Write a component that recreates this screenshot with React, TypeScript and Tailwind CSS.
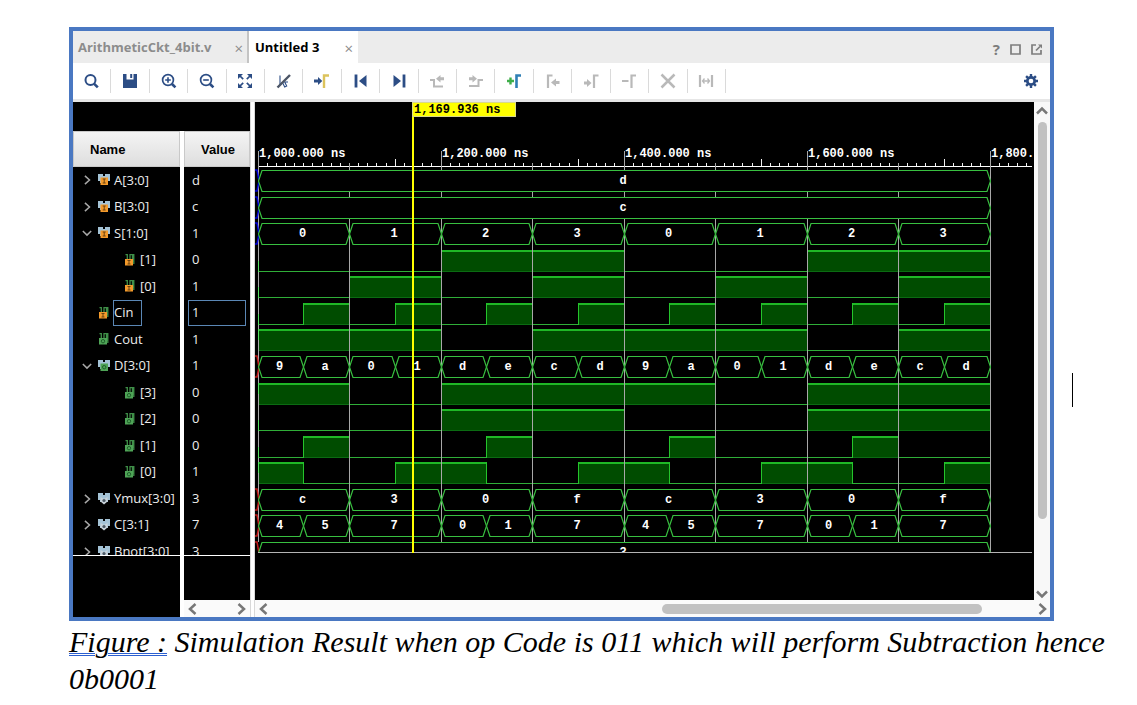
import type { ReactNode } from "react";

type Kind = "bus-in" | "bus-out" | "bus" | "bit-in" | "bit-out";
type Cell = { from: number; to: number; label: string };
type Signal = {
  name: string;
  value: string;
  kind: Kind;
  tree?: "open" | "closed";
  nested?: boolean;
  selected?: boolean;
  start?: string;
  cells?: Cell[];
  high?: [number, number][];
};

const spread = (labels: string, step: number): Cell[] =>
  labels.split("").map((label, i) => ({
    from: 1000 + i * step,
    to: 1000 + (i + 1) * step,
    label,
  }));

const carry: Cell[] = [1000, 1400].flatMap((t) => [
  { from: t, to: t + 50, label: "4" },
  { from: t + 50, to: t + 100, label: "5" },
  { from: t + 100, to: t + 200, label: "7" },
  { from: t + 200, to: t + 250, label: "0" },
  { from: t + 250, to: t + 300, label: "1" },
  { from: t + 300, to: t + 400, label: "7" },
]);

const BLUE = "#0000d8";
const RED = "#c01818";

const signals: Signal[] = [
  { name: "A[3:0]", value: "d", kind: "bus-in", tree: "closed", start: BLUE, cells: spread("d", 800) },
  { name: "B[3:0]", value: "c", kind: "bus-in", tree: "closed", start: BLUE, cells: spread("c", 800) },
  { name: "S[1:0]", value: "1", kind: "bus-in", tree: "open", start: BLUE, cells: spread("01230123", 100) },
  { name: "[1]", value: "0", kind: "bit-in", nested: true, high: [[1200, 1400], [1600, 1800]] },
  { name: "[0]", value: "1", kind: "bit-in", nested: true, high: [[1100, 1200], [1300, 1400], [1500, 1600], [1700, 1800]] },
  {
    name: "Cin", value: "1", kind: "bit-in", selected: true,
    high: [[1050, 1100], [1150, 1200], [1250, 1300], [1350, 1400], [1450, 1500], [1550, 1600], [1650, 1700], [1750, 1800]],
  },
  { name: "Cout", value: "1", kind: "bit-out", high: [[1000, 1200], [1300, 1600], [1700, 1800]] },
  { name: "D[3:0]", value: "1", kind: "bus-out", tree: "open", start: RED, cells: spread("9a01decd9a01decd", 50) },
  { name: "[3]", value: "0", kind: "bit-out", nested: true, high: [[1000, 1100], [1200, 1500], [1600, 1800]] },
  { name: "[2]", value: "0", kind: "bit-out", nested: true, high: [[1200, 1400], [1600, 1800]] },
  { name: "[1]", value: "0", kind: "bit-out", nested: true, high: [[1050, 1100], [1250, 1300], [1450, 1500], [1650, 1700]] },
  { name: "[0]", value: "1", kind: "bit-out", nested: true, high: [[1000, 1050], [1150, 1250], [1350, 1450], [1550, 1650], [1750, 1800]] },
  { name: "Ymux[3:0]", value: "3", kind: "bus", tree: "closed", start: RED, cells: spread("c30fc30f", 100) },
  { name: "C[3:1]", value: "7", kind: "bus", tree: "closed", start: RED, cells: carry },
  { name: "Bnot[3:0]", value: "3", kind: "bus", tree: "closed", start: RED, cells: spread("3", 800) },
];

/* ---------- icons ---------- */

function Icon({ children, tone = "#2c4d85" }: { children: ReactNode; tone?: string }) {
  return (
    <svg width="16" height="16" viewBox="0 0 16 16" fill="none" stroke={tone} strokeWidth="2" aria-hidden="true">
      {children}
    </svg>
  );
}

const OFF = "#b9b9b9";

const tools: { label: string; icon: ReactNode; disabled?: boolean }[] = [
  { label: "Find", icon: <Icon><circle cx="6.5" cy="7" r="5" /><path d="M10.200 10.800 13.800 14.400" strokeWidth="2.6" /></Icon> },
  {
    label: "Save",
    icon: (
      <Icon>
        <path d="M1 1h3.5v5.5h7V1H15v14H1z" fill="#2c4d85" stroke="none" />
        <path d="M8.2 1h2v4h-2z" fill="#2c4d85" stroke="none" />
      </Icon>
    ),
  },
  { label: "Zoom In", icon: <Icon><circle cx="7" cy="7" r="5.4" strokeWidth="1.7" /><path d="M4.2 7h5.6M7 4.2v5.6" strokeWidth="1.6" /><path d="M11 11l3.4 3.4" strokeWidth="2.6" /></Icon> },
  { label: "Zoom Out", icon: <Icon><circle cx="7" cy="7" r="5.4" strokeWidth="1.7" /><path d="M4.2 7h5.6" strokeWidth="1.6" /><path d="M11 11l3.4 3.4" strokeWidth="2.6" /></Icon> },
  {
    label: "Zoom Fit",
    icon: (
      <Icon>
        <path d="M1 1h5L1 6zM15 1v5l-5-5zM1 15v-5l5 5zM15 15h-5l5-5z" fill="#2c4d85" stroke="none" />
        <path d="M2.5 2.5l3.7 3.7M13.5 2.5 9.8 6.2M2.5 13.5l3.7-3.7M13.5 13.5 9.8 9.8" strokeWidth="1.7" />
      </Icon>
    ),
  },
  {
    label: "Snap Cursor Off",
    icon: (
      <Icon>
        <path d="M4 2.500v9l2.500-2 2.200 4.500 2-1-2-4H12" strokeWidth="1.100" />
        <path d="M1.500 14.500 14 2" stroke="#4c5566" strokeWidth="2.400" />
      </Icon>
    ),
  },
  {
    label: "Go to Cursor",
    icon: (
      <Icon>
        <path d="M0 6.500h4V4l4.300 4L4 12V9.500H0z" fill="#2c4d85" stroke="none" />
        <path d="M10 15V2.500h5" stroke="#dcc35c" strokeWidth="2.400" />
      </Icon>
    ),
  },
  { label: "Go to Start", icon: <Icon><path d="M3 1.500v13" strokeWidth="2.800" /><path d="M13.500 2v12L6 8z" fill="#2c4d85" stroke="none" /></Icon> },
  { label: "Go to End", icon: <Icon><path d="M13 1.500v13" strokeWidth="2.800" /><path d="M2.500 2v12L10 8z" fill="#2c4d85" stroke="none" /></Icon> },
  {
    label: "Previous Transition",
    disabled: true,
    icon: (
      <Icon tone={OFF}>
        <path d="M1 7h4v6.500H14" />
        <path d="M15 4.200h-3.500V2L7 5.700l4.500 3.800V7.200H15z" fill={OFF} stroke="none" />
      </Icon>
    ),
  },
  {
    label: "Next Transition",
    disabled: true,
    icon: (
      <Icon tone={OFF}>
        <path d="M1 13h9.500V7H15" />
        <path d="M1 4.200h3.500V2L9 5.700 4.500 9.500V7.200H1z" fill={OFF} stroke="none" />
      </Icon>
    ),
  },
  {
    label: "Add Marker",
    icon: (
      <Icon>
        <path d="M1 8h7M4.500 4.500v7" stroke="#3fae49" strokeWidth="2.400" />
        <path d="M10.500 15V2.500H15" stroke="#2f7fb5" strokeWidth="2.600" />
      </Icon>
    ),
  },
  {
    label: "Previous Marker",
    disabled: true,
    icon: (
      <Icon tone={OFF}>
        <path d="M3 15V2.500h4.500" strokeWidth="2.200" />
        <path d="M14.500 8H11V5.500L6 9.500 11 13.500V11h3.500z" fill={OFF} stroke="none" />
      </Icon>
    ),
  },
  {
    label: "Next Marker",
    disabled: true,
    icon: (
      <Icon tone={OFF}>
        <path d="M11 15V2.500h4.500" strokeWidth="2.200" />
        <path d="M1 8.500h3V6l4.500 4L4 14v-2.500H1z" fill={OFF} stroke="none" />
      </Icon>
    ),
  },
  { label: "Remove Marker", disabled: true, icon: <Icon tone={OFF}><path d="M1 8h6.500M10.500 15V2.500H15" strokeWidth="2.200" /></Icon> },
  { label: "Delete", disabled: true, icon: <Icon tone={OFF}><path d="M1.500 1.500l13 13M14.500 1.500l-13 13" strokeWidth="2.500" /></Icon> },
  {
    label: "Swap Cursors",
    disabled: true,
    icon: <Icon tone={OFF}><path d="M2 2v12M14 2v12" strokeWidth="2.200" /><path d="M4.500 8h7M6.500 5.500 4.500 8l2 2.500M9.500 5.500l2 2.500-2 2.500" strokeWidth="1.300" /></Icon>,
  },
];

function Gear() {
  return (
    <svg width="14" height="14" viewBox="0 0 14 14" fill="none" stroke="#2c4d85" aria-hidden="true">
      <circle cx="7" cy="7" r="3.700" strokeWidth="2.700" />
      <path
        d="M7 0v3M7 11v3M0 7h3M11 7h3M2.100 2.100l2 2M9.900 9.900l2 2M11.900 2.100l-2 2M4.100 9.900l-2 2"
        strokeWidth="2.400"
      />
    </svg>
  );
}

function Chevron({ to, small }: { to: "left" | "right" | "up" | "down"; small?: boolean }) {
  const d = {
    left: "M8.500 1 3 6l5.500 5",
    right: "M3.500 1 9 6l-5.500 5",
    up: "M1 8.500 6 3.500l5 5",
    down: "M1 3.500 6 8.500l5-5",
  }[to];
  return (
    <svg
      className="block shrink-0"
      width={small ? 10 : 12}
      height={small ? 10 : 12}
      viewBox="0 0 12 12"
      fill="none"
      stroke={small ? "#a8a8a8" : "#777777"}
      strokeWidth={small ? 1.8 : 2.500}
      aria-hidden="true"
    >
      <path d={d} />
    </svg>
  );
}

function SignalIcon({ kind }: { kind: Kind }) {
  const badge = kind.endsWith("-in") ? "#f39a2b" : "#4fa457";
  return (
    <svg className="shrink-0" width="12" height="12" viewBox="0 0 12 12" fill="none" aria-hidden="true">
      {kind.startsWith("bus") ? (
        <>
          <path d="M0 0h5v2h2V0h5v7h-2V9H2V7H0z" fill="#a4c3d6" />
          {kind === "bus" ? (
            <>
              <path d="M2.500 4 6 6l3.500-2v4.500L6 11.500 2.500 8.500z" fill="#c9d3da" />
              <circle cx="6" cy="7.500" r="1.600" fill="#4c5a66" />
            </>
          ) : (
            <rect x="2.500" y="3.500" width="7.500" height="7.500" fill={badge} />
          )}
        </>
      ) : (
        <>
          <path d="M1.500 .700h1.800V6M6 6V.700h2.500V8M9.800 0v10" stroke="#3f8f48" strokeWidth="1.300" />
          <rect x="1" y="5" width="8" height="6.500" fill={badge} />
        </>
      )}
      {kind.endsWith("-in") && (
        <path d={kind === "bus-in" ? "M4.700 5h3M6.200 5v4M4.700 9h3" : "M3.500 6.500h3M5 6.500V10M3.500 10h3"} stroke="#6b4312" />
      )}
      {kind.endsWith("-out") && (
        <circle cx={kind === "bus-out" ? 6.200 : 5} cy={kind === "bus-out" ? 7.200 : 8.200} r="1.700" stroke="#1f5f2a" />
      )}
    </svg>
  );
}

/* ---------- waveform ---------- */

const PX_PER_NS = 183 / 200;
const ROW = 26.57;
const xAt = (t: number) => Math.floor(3 + (t - 1000) * PX_PER_NS);
const END = xAt(1800);
const GREEN = "#38bf40";

function BusTrace({ signal, top }: { signal: Signal; top: number }) {
  const mid = top + 11;
  const bottom = top + 21;
  return (
    <g>
      {signal.start && (
        <path d={`M0 ${top}h2L4 ${mid} 2 ${bottom}H0`} fill="none" stroke={signal.start} strokeWidth="1.500" />
      )}
      {signal.cells!.map((c) => {
        const a = xAt(c.from);
        const b = xAt(c.to);
        return (
          <g key={c.from}>
            <path
              d={`M${a + 0.5} ${mid}L${a + 4} ${top + 0.5}H${b - 3}L${b + 0.5} ${mid}L${b - 3} ${bottom + 0.5}H${a + 4}z`}
              fill="#000"
              stroke={GREEN}
              strokeWidth="1.200"
            />
            <text x={(a + b) / 2 - 1} y={top + 14} textAnchor="middle" fill="#fff">
              {c.label}
            </text>
          </g>
        );
      })}
    </g>
  );
}

function BitTrace({ signal, top }: { signal: Signal; top: number }) {
  return (
    <g shapeRendering="crispEdges">
      <path d={`M4 ${top + 21.5}H${END}`} stroke="#2fae38" />
      {signal.high!.map(([from, to]) => {
        const a = xAt(from);
        const b = xAt(to);
        return (
          <g key={from}>
            <rect x={a} y={top} width={b - a} height="21" fill="#004c00" />
            <path d={`M${a} ${top + 21.5}H${b}`} stroke="#0b6b12" />
            <path d={`M${a} ${top + 1}H${b}`} stroke="#1fb826" strokeWidth="2" />
            <path d={`M${a + 0.5} ${top}v22M${b + 0.5} ${top}v22`} stroke="#25c42c" />
          </g>
        );
      })}
    </g>
  );
}

function Waveform() {
  const ticks = Array.from({ length: 85 }, (_, i) => 1000 + i * 10).filter((t) => t !== 1000);
  const rows = signals.map((signal, i) => ({ signal, top: Math.round(68 + i * ROW) }));
  return (
    <svg
      className="block w-full bg-black font-['Liberation_Mono',monospace] text-[12px] font-bold"
      height="498"
      role="img"
      aria-label="Simulation waveform"
    >
      <clipPath id="traces">
        <rect x="0" y="0" width="100%" height="450" />
      </clipPath>
      <g shapeRendering="crispEdges">
        <path d="M3 64.500H777" stroke="#fff" />
        {ticks.map((t) => (
          <path
            key={t}
            d={`M${xAt(t) + 0.5} ${t % 200 === 150 ? 57 : 61}V64`}
            stroke="#f2f2f2"
          />
        ))}
      </g>
      <g clipPath="url(#traces)">
        {rows.filter((r) => r.signal.high).map((r, i) => <BitTrace key={i} {...r} />)}
        <g shapeRendering="crispEdges">
          {[1000, 1100, 1200, 1300, 1400, 1500, 1600, 1700, 1800].map((t) => (
            <path
              key={t}
              d={`M${xAt(t) + 0.5} ${t % 200 ? 61 : 49}V${t === 1800 ? 450 : 440}`}
              stroke="#a8a8a8"
            />
          ))}
        </g>
        {rows.filter((r) => r.signal.cells).map((r, i) => <BusTrace key={i} {...r} />)}
        {rows.filter((r) => r.signal.high).map(({ top, signal }, i) => (
          <path
            key={i}
            d={`M3.500 ${signal.high![0][0] === 1000 ? top : top + 11}v11`}
            stroke="#55e060"
          />
        ))}
      </g>
      {[1000, 1200, 1400, 1600, 1800].map((t) => (
        <text key={t} x={xAt(t) + 1} y="55" fill="#fff">
          {`1,${t === 1000 ? "000" : t - 1000}.000 ns`}
        </text>
      ))}
      <path d="M3 450.500H777" stroke="#b4b4b4" shapeRendering="crispEdges" />
      <path d="M158 0V451" stroke="#ffff00" strokeWidth="2" shapeRendering="crispEdges" />
      <rect x="157.500" y="0.500" width="103" height="14" fill="#ffff00" stroke="#d9d98a" />
      <text x="159" y="11" fill="#000">1,169.936 ns</text>
    </svg>
  );
}

/* ---------- signal panes ---------- */

function PaneHeader({ children }: { children: ReactNode }) {
  return (
    <div className="flex h-9 shrink-0 items-center border border-[#c9c9c9] bg-linear-to-b from-[#f4f4f4] to-[#dedede] pt-px pl-4 font-['Liberation_Sans',sans-serif] text-[13px] font-bold text-black">
      {children}
    </div>
  );
}

function SignalPanes() {
  return (
    <div className="flex w-[177px] shrink-0 flex-col text-[13px] text-[#ececec]">
      <div className="h-[29px] bg-black" />
      <div className="flex flex-1 gap-1">
        <div className="flex w-[107px] flex-col bg-black">
          <PaneHeader>Name</PaneHeader>
          <div className="h-[389px] overflow-hidden border-b border-white">
            <ul className="flex h-[398px] flex-col">
              {signals.map((s, i) => (
                <li key={i} className={`flex flex-1 items-center ${s.nested ? "pl-[51px]" : s.tree ? "pl-[9px]" : "pl-[25px]"}`}>
                  {s.tree && (
                    <button className="mr-1.5 flex" aria-label={`${s.tree === "open" ? "Collapse" : "Expand"} ${s.name}`}>
                      <Chevron to={s.tree === "open" ? "down" : "right"} small />
                    </button>
                  )}
                  <SignalIcon kind={s.kind} />
                  <span className={`ml-[3px] flex h-full items-center border whitespace-nowrap ${s.selected ? "border-[#5b87b5] pr-2" : "border-transparent"}`}>
                    {s.name}
                  </span>
                </li>
              ))}
            </ul>
          </div>
        </div>
        <div className="flex w-[66px] flex-col bg-black">
          <PaneHeader>Value</PaneHeader>
          <div className="h-[389px] overflow-hidden border-b border-white">
            <ul className="flex h-[398px] flex-col">
              {signals.map((s, i) => (
                <li key={i} className={`mx-1 flex flex-1 items-center border pl-[3px] ${s.selected ? "border-[#5b87b5]" : "border-transparent"}`}>
                  {s.value}
                </li>
              ))}
            </ul>
          </div>
          <div className="mt-auto flex h-[17px] items-center justify-between bg-[#fafafa] px-[3px]">
            <button aria-label="Scroll values left"><Chevron to="left" /></button>
            <button aria-label="Scroll values right"><Chevron to="right" /></button>
          </div>
        </div>
      </div>
    </div>
  );
}

/* ---------- window ---------- */

function Tabs() {
  return (
    <div className="flex h-8 items-stretch bg-[#ececec] text-[13px] font-bold">
      <div className="flex w-44 items-center justify-between border-r-2 border-[#c4c4c4] pt-0.5 pr-1 pl-[5px] text-[#8c8c8c]">
        <button>ArithmeticCkt_4bit.v</button>
        <button className="text-[15px] font-normal" aria-label="Close ArithmeticCkt_4bit.v">×</button>
      </div>
      <div className="flex w-[109px] items-center justify-between bg-white pt-0.5 pr-[5px] pl-1.5 text-black">
        <button>Untitled 3</button>
        <button className="text-[15px] font-normal text-[#8c8c8c]" aria-label="Close Untitled 3">×</button>
      </div>
      <div className="ml-auto flex items-center gap-2.5 pt-1 pr-2 text-[#7d7d7d]">
        <button className="text-[15px] leading-none" aria-label="Help">?</button>
        <button aria-label="Maximize">
          <svg width="11" height="11" viewBox="0 0 11 11" fill="none" stroke="currentColor" strokeWidth="1.700"><path d="M1 1h9v9H1z" /></svg>
        </button>
        <button aria-label="Float">
          <svg width="11" height="11" viewBox="0 0 11 11" fill="none" stroke="currentColor" strokeWidth="1.700">
            <path d="M5 1H1v9h9V6M5 6.500 9 2.500" />
            <path d="M7 .500h4v4z" fill="currentColor" stroke="none" />
          </svg>
        </button>
      </div>
    </div>
  );
}

function Toolbar() {
  return (
    <div className="flex h-[39px] items-center justify-between border-b-[3px] border-[#e6e6e6] bg-white pr-3">
      <div className="flex h-6 w-[653px]">
        {tools.map((t) => (
          <button
            key={t.label}
            aria-label={t.label}
            disabled={t.disabled}
            className="flex flex-1 items-center justify-center border-r border-[#dadada]"
          >
            {t.icon}
          </button>
        ))}
      </div>
      <button aria-label="Settings"><Gear /></button>
    </div>
  );
}

export default function App() {
  return (
    <main className="min-h-screen bg-white pt-[27px] pl-[69px] font-['Open_Sans','Noto_Sans',sans-serif]">
      <div className="flex items-center pr-16">
        <section className="min-w-0 flex-1 border-4 border-[#4a78c2] bg-white">
          <Tabs />
          <Toolbar />
          <div className="flex">
            <SignalPanes />
            <div className="w-[5px] shrink-0 border-x border-[#d8d8d8] bg-white" />
            <div className="min-w-0 flex-1">
              <div className="flex">
                <div className="min-w-0 flex-1 overflow-hidden">
                  <Waveform />
                </div>
                <div className="flex w-4 shrink-0 flex-col items-center bg-[#f8f8f8] pt-[3px]">
                  <button aria-label="Scroll up"><Chevron to="up" /></button>
                  <div className="flex w-full flex-1 flex-col items-center pt-[5px]">
                    <div className="h-[397px] w-[9px] rounded-full bg-[#c1c1c1]" />
                  </div>
                  <button aria-label="Scroll down"><Chevron to="down" /></button>
                </div>
              </div>
              <div className="flex h-[17px] items-center bg-[#fafafa] pr-0.5 pl-[3px]">
                <button aria-label="Scroll left"><Chevron to="left" /></button>
                <div className="flex flex-1 justify-end pr-[54px]">
                  <div className="h-2.5 w-80 rounded-full bg-[#c1c1c1]" />
                </div>
                <button aria-label="Scroll right"><Chevron to="right" /></button>
              </div>
            </div>
          </div>
        </section>
        <div className="mt-[132px] ml-[18px] h-[34px] w-px bg-black" />
      </div>
      <p className="pt-0.5 pr-6 font-['Liberation_Serif',serif] text-[30px] leading-[37px] text-black italic">
        <span className="underline decoration-[#2b5fd0] decoration-double decoration-1 underline-offset-1">Figure :</span>{" "}
        Simulation Result when op Code is 011 which will perform Subtraction hence 0b0001
      </p>
    </main>
  );
}
